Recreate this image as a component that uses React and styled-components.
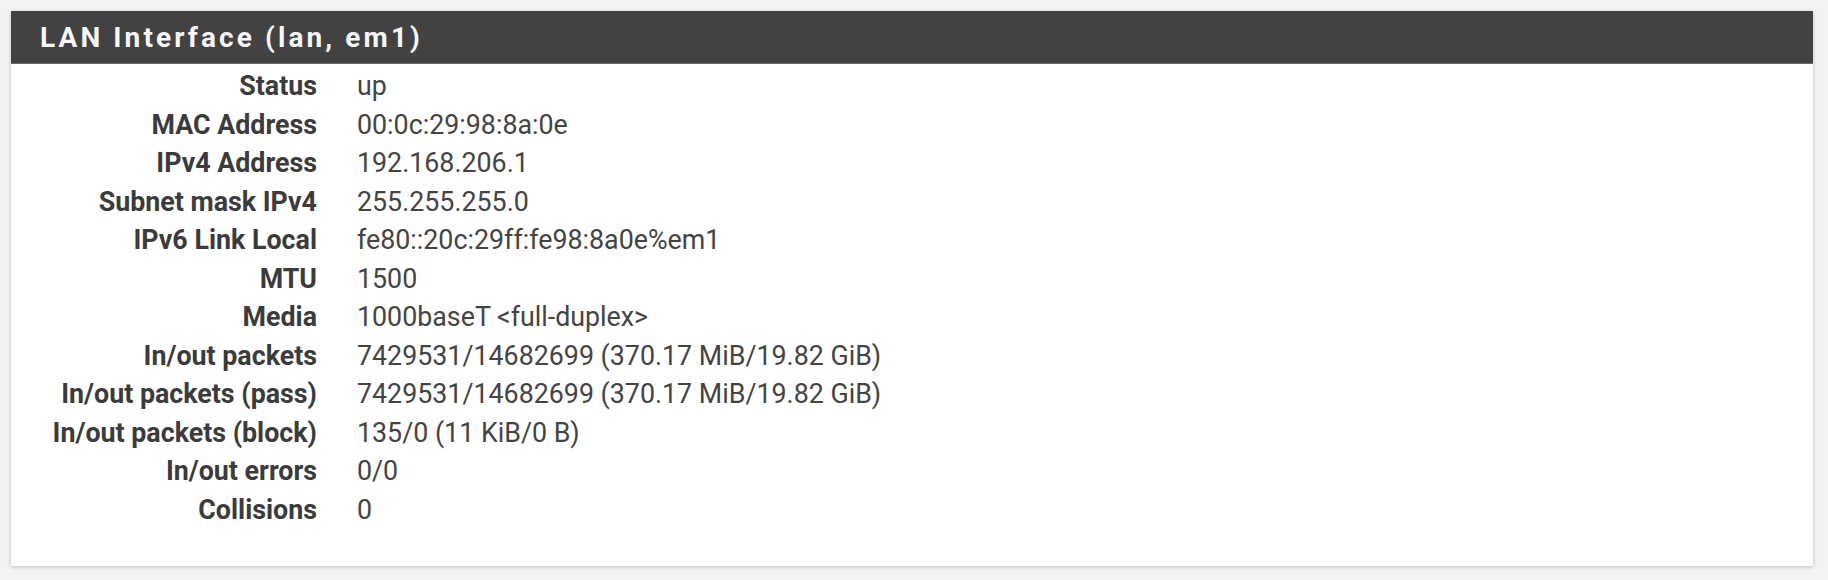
import React from "react";
import styled, { createGlobalStyle } from "styled-components";

const rows = [
  ["Status", "up"],
  ["MAC Address", "00:0c:29:98:8a:0e"],
  ["IPv4 Address", "192.168.206.1"],
  ["Subnet mask IPv4", "255.255.255.0"],
  ["IPv6 Link Local", "fe80::20c:29ff:fe98:8a0e%em1"],
  ["MTU", "1500"],
  ["Media", "1000baseT <full-duplex>"],
  ["In/out packets", "7429531/14682699 (370.17 MiB/19.82 GiB)"],
  ["In/out packets (pass)", "7429531/14682699 (370.17 MiB/19.82 GiB)"],
  ["In/out packets (block)", "135/0 (11 KiB/0 B)"],
  ["In/out errors", "0/0"],
  ["Collisions", "0"],
];

const App = () => {
  return (
    <Page>
      <GlobalStyle />
      <Panel>
        <Heading>
          <Title>LAN Interface (lan, em1)</Title>
        </Heading>
        <Body>
          <InfoList>
            {rows.map(([label, value]) => (
              <React.Fragment key={label}>
                <Term>{label}</Term>
                <Detail>{value}</Detail>
              </React.Fragment>
            ))}
          </InfoList>
        </Body>
      </Panel>
    </Page>
  );
};

export default App;

const GlobalStyle = createGlobalStyle`
  html, body {
    margin: 0;
    padding: 0;
    background: #f3f3f3;
    font-family: Roboto, "Liberation Sans", sans-serif;
  }
`;

const Page = styled.div`
  padding: 11px 15px 14px 11px;
  min-height: 580px;
  box-sizing: border-box;
`;

const Panel = styled.div`
  background: #fff;
  box-shadow: 0 1px 4px rgba(0, 0, 0, 0.22);
`;

const Heading = styled.div`
  background: #424242;
  height: 53px;
  display: flex;
  align-items: center;
  padding-left: 29px;
  border-bottom: 1px solid #6a6a6a;
  box-sizing: border-box;
`;

const Title = styled.h2`
  margin: 0;
  color: #f7f7f7;
  font-size: 28px;
  font-weight: 700;
  letter-spacing: 3.1px;
`;

const Body = styled.div`
  padding: 3px 0 37px 0;
`;

const InfoList = styled.dl`
  margin: 0;
  display: grid;
  grid-template-columns: 306px 1fr;
  column-gap: 40px;
  font-size: 26.8px;
  line-height: 38.5px;
  color: #3b3b3b;
`;

const Term = styled.dt`
  margin: 0;
  text-align: right;
  font-weight: 700;
  white-space: nowrap;
`;

const Detail = styled.dd`
  margin: 0;
  white-space: nowrap;
  color: #444;
`;
